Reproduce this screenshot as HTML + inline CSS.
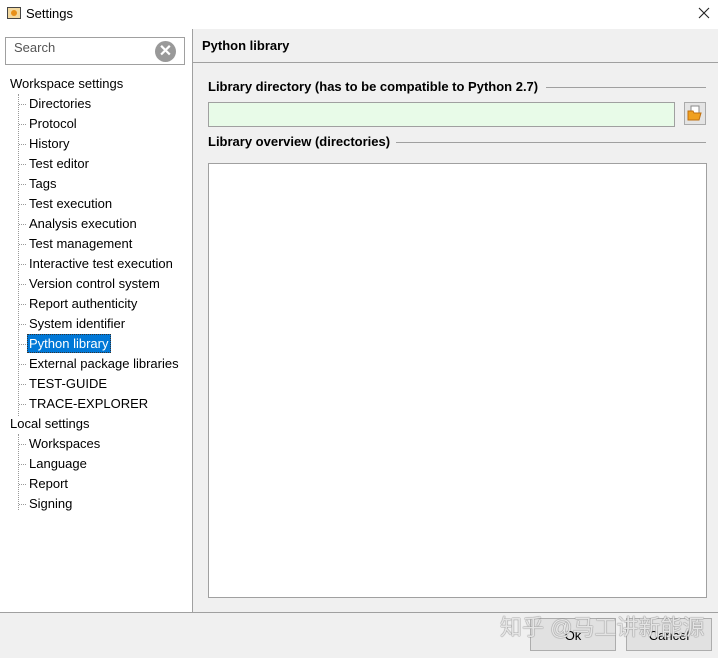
<!DOCTYPE html>
<html><head><meta charset="utf-8"><style>
*{margin:0;padding:0;box-sizing:border-box}
body{width:718px;height:658px;background:#fff;font-family:"Liberation Sans","Noto Sans CJK SC",sans-serif;font-size:13px;color:#000;position:relative;overflow:hidden}
.a{position:absolute}
.t{position:absolute;white-space:nowrap;line-height:16px}
.b{font-weight:bold}
</style></head><body>
<div class="a" style="left:7px;top:7px;width:14px;height:12px;border:1px solid #444;background:#f3d9a0"></div>
<div class="a" style="left:11px;top:10px;width:6px;height:6px;border-radius:50%;background:#e8901a"></div>
<div class="t" style="left:26px;top:6px">Settings</div>
<svg class="a" style="left:698px;top:7px" width="12" height="12" viewBox="0 0 12 12"><path d="M1 1L11 11M11 1L1 11" stroke="#222" stroke-width="1.1"/></svg>

<div class="a" style="left:5px;top:37px;width:180px;height:28px;border:1px solid #a0a0a0;background:#fff"></div>
<div class="t" style="left:14px;top:40px;color:#555">Search</div>
<div class="a" style="left:155px;top:41px;width:21px;height:21px;border-radius:50%;background:#999;color:#fff;font-size:16px;font-weight:bold;text-align:center;line-height:21px">✕</div>

<div class="a" style="left:18px;top:94px;height:322px;border-left:1px dotted #999"></div>
<div class="a" style="left:18px;top:434px;height:76px;border-left:1px dotted #999"></div>

<div class="t" style="left:10px;top:76px">Workspace settings</div>
<div id="tree"></div>
<div class="a" style="left:27px;top:334px;width:84px;height:19px;background:#0078d7;border:1px dotted #333"></div>

<div class="a" style="left:192px;top:29px;width:1px;height:583px;background:#a0a0a0"></div>

<div class="a" style="left:193px;top:29px;width:525px;height:583px;background:#f0f0f0"></div>
<div class="t b" style="left:202px;top:38px">Python library</div>
<div class="a" style="left:193px;top:62px;width:525px;height:1px;background:#a0a0a0"></div>
<div class="t b" style="left:208px;top:79px">Library directory (has to be compatible to Python 2.7)</div>
<div class="a" style="left:546px;top:87px;width:160px;height:1px;background:#a0a0a0"></div>
<div class="a" style="left:208px;top:102px;width:467px;height:25px;border:1px solid #a0a0a0;background:#e8fbe8"></div>
<div class="a" style="left:684px;top:102px;width:22px;height:23px;border:1px solid #aaa;background:#e4e4e4"></div>
<svg class="a" style="left:687px;top:105px" width="16" height="16" viewBox="0 0 16 16"><rect x="4" y="1" width="8" height="9" fill="#fff" stroke="#888"/><path d="M1 6h5l1 2h7l-2 7H1z" fill="#f0a020" stroke="#c07010"/></svg>
<div class="t b" style="left:208px;top:134px">Library overview (directories)</div>
<div class="a" style="left:396px;top:142px;width:310px;height:1px;background:#a0a0a0"></div>
<div class="a" style="left:208px;top:163px;width:499px;height:435px;border:1px solid #a0a0a0;background:#fff"></div>

<div class="a" style="left:0;top:612px;width:718px;height:46px;background:#f0f0f0;border-top:1px solid #a0a0a0"></div>
<div class="a" style="left:530px;top:618px;width:86px;height:33px;border:1px solid #adadad;background:#e1e1e1;text-align:center;line-height:33px">Ok</div>
<div class="a" style="left:626px;top:618px;width:86px;height:33px;border:1px solid #adadad;background:#e1e1e1;text-align:center;line-height:33px">Cancel</div>
<div class="t" style="left:500px;top:614px;font-size:22px;line-height:28px;color:rgba(255,255,255,0.8);text-shadow:0 0 1px #777,0 0 1px #777">知乎 @马工讲新能源</div>

<script>
var items=["Directories","Protocol","History","Test editor","Tags","Test execution","Analysis execution","Test management","Interactive test execution","Version control system","Report authenticity","System identifier","Python library","External package libraries","TEST-GUIDE","TRACE-EXPLORER",null,"Workspaces","Language","Report","Signing"];
var h="";
items.forEach(function(s,i){var y=96+i*20;
if(s===null){h+='<div class="t" style="left:10px;top:'+(y)+'px">Local settings</div>';return;}
h+='<div class="a" style="left:19px;top:'+(y+8)+'px;width:7px;border-top:1px dotted #999"></div>';
h+='<div class="t" style="left:29px;top:'+y+'px;z-index:2;'+(s=="Python library"?"color:#fff":"")+'">'+s+'</div>';});
document.getElementById("tree").innerHTML=h;
</script>
</body></html>
